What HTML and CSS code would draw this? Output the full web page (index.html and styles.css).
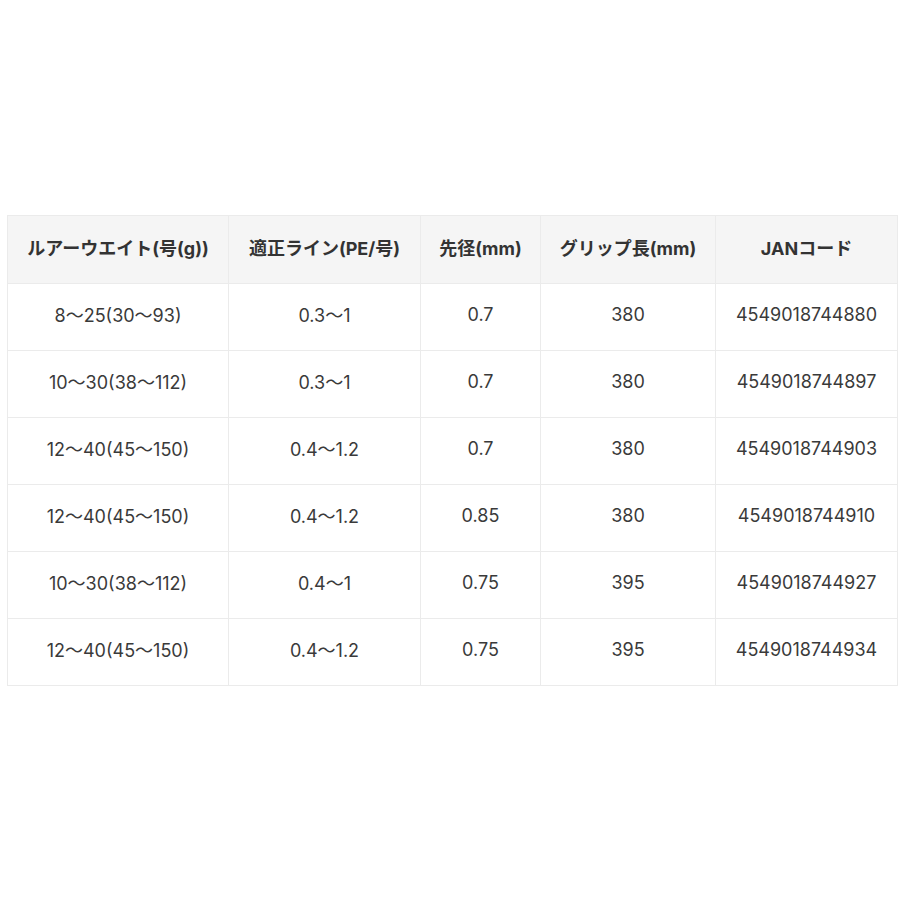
FILE: index.html
```html
<!DOCTYPE html>
<html lang="ja">
<head>
<meta charset="utf-8">
<link rel="stylesheet" href="styles.css">
</head>
<body>
<div class="wrap">
<table class="spec">
<colgroup>
<col class="c1"><col class="c2"><col class="c3"><col class="c4"><col class="c5">
</colgroup>
<thead>
<tr><th>ルアーウエイト(号(g))</th><th>適正ライン(PE/号)</th><th>先径(mm)</th><th>グリップ長(mm)</th><th>JANコード</th></tr>
</thead>
<tbody>
<tr><td>8～25(30～93)</td><td>0.3～1</td><td>0.7</td><td>380</td><td>4549018744880</td></tr>
<tr><td>10～30(38～112)</td><td>0.3～1</td><td>0.7</td><td>380</td><td>4549018744897</td></tr>
<tr><td>12～40(45～150)</td><td>0.4～1.2</td><td>0.7</td><td>380</td><td>4549018744903</td></tr>
<tr><td>12～40(45～150)</td><td>0.4～1.2</td><td>0.85</td><td>380</td><td>4549018744910</td></tr>
<tr><td>10～30(38～112)</td><td>0.4～1</td><td>0.75</td><td>395</td><td>4549018744927</td></tr>
<tr><td>12～40(45～150)</td><td>0.4～1.2</td><td>0.75</td><td>395</td><td>4549018744934</td></tr>
</tbody>
</table>
</div>
</body>
</html>
```
FILE: styles.css
```css
html, body {
  margin: 0;
  padding: 0;
  background: #fff;
}
.wrap {
  padding-top: 215px;
  padding-left: 7px;
}
.spec {
  border-collapse: collapse;
  table-layout: fixed;
  width: 890px;
  font-family: "Inter", "Noto Sans CJK JP", sans-serif;
  font-size: 18px;
  color: #333;
}
.c1 { width: 221px; }
.c2 { width: 192px; }
.c3 { width: 120px; }
.c4 { width: 175px; }
.c5 { width: 182px; }
.spec th, .spec td {
  border: 1px solid #ebebeb;
  text-align: center;
  vertical-align: middle;
  padding: 0 0 6px;
  white-space: nowrap;
}
.spec th {
  height: 61px;
  background: #f5f5f5;
  font-weight: 700;
  color: #333;
}
.spec td {
  height: 60px;
  font-weight: 400;
  color: #3a3a3a;
}
```
